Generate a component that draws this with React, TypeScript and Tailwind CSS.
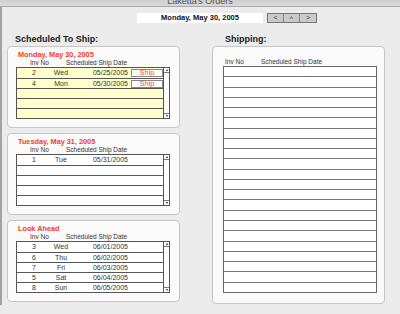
import React from "react";

const font = { fontFamily: '"Liberation Sans", Arial, sans-serif' };

type Row = { inv: string; day: string; date: string; ship?: boolean };

function ScrollBar() {
  return (
    <div className="w-[6px] border-l border-[#555] bg-white flex flex-col justify-between">
      <div className="h-[5px] border-b border-[#777] flex items-center justify-center">
        <div className="w-0 h-0 border-l-[1.5px] border-r-[1.5px] border-b-[2px] border-l-transparent border-r-transparent border-b-[#222]" />
      </div>
      <div className="h-[5px] border-t border-[#777] flex items-center justify-center">
        <div className="w-0 h-0 border-l-[1.5px] border-r-[1.5px] border-t-[2px] border-l-transparent border-r-transparent border-t-[#222]" />
      </div>
    </div>
  );
}

function SmallTable({ rows, yellow }: { rows: Row[]; yellow?: boolean }) {
  const all: (Row | null)[] = [...rows];
  while (all.length < 5) all.push(null);
  return (
    <div className={`ml-[8px] w-[154px] flex border border-[#555] ${yellow ? "bg-[#ffffcc]" : "bg-white"}`}>
      <div className="flex-1 flex flex-col">
        {all.map((r, i) => (
          <div
            key={i}
            className={`h-[10px] flex items-center text-[7px] leading-[10px] text-[#333] ${i > 0 ? "border-t border-[#555]" : ""}`}
          >
            {r && (
              <>
                <div className="w-[34px] text-center">{r.inv}</div>
                <div className="w-[20px] text-center">{r.day}</div>
                <div className="w-[58px] text-right pr-[1px]">{r.date}</div>
                {r.ship && (
                  <div className="ml-[2px] w-[32px] h-[8px] bg-white border border-[#888] text-[#ff4a3a] text-[7.5px] leading-[6px] text-center">
                    Ship
                  </div>
                )}
              </>
            )}
          </div>
        ))}
      </div>
      <ScrollBar />
    </div>
  );
}

function Panel({ title, rows, yellow }: { title: string; rows: Row[]; yellow?: boolean }) {
  return (
    <div className="h-[82px] rounded-[4px] border border-[#c6c6c6] bg-[#fafafa] pt-[3px]">
      <div className="ml-[10px] h-[9px] text-[7.3px] leading-[9px] font-bold text-[#f5401e]">{title}</div>
      <div className="h-[8px] flex text-[6.5px] leading-[8px] text-[#333]">
        <div className="ml-[22px] w-[36px]">Inv No</div>
        <div>Scheduled Ship Date</div>
      </div>
      <SmallTable rows={rows} yellow={yellow} />
    </div>
  );
}

export default function App() {
  const bigRows = Array.from({ length: 22 });
  return (
    <div className="w-[400px] h-[314px] bg-[#ebebeb] flex flex-col overflow-hidden" style={font}>
      {/* title bar */}
      <div className="h-[7px] overflow-hidden bg-gradient-to-b from-[#cfcfcf] to-[#d9d9d9] border-b border-[#a9a9a9] flex justify-center">
        <div className="-mt-[4px] text-[9px] leading-[10px] text-[#555]">Laketta's Orders</div>
      </div>
      <div className="h-[298px] border-l-2 border-[#a3a3a3] flex flex-col">
        {/* date row */}
        <div className="mt-[6px] h-[10px] flex">
          <div className="ml-[135px] w-[126px] h-[10px] bg-white text-[7.5px] leading-[10px] font-bold text-[#111] text-center">
            Monday, May 30, 2005
          </div>
          <div className="ml-[4px] flex h-[10px] border border-[#777] bg-[#c9c9c9]">
            <div className="w-[16px] text-[7px] leading-[8px] text-center text-[#333] border-r border-[#888]">&lt;</div>
            <div className="w-[16px] text-[7px] leading-[9px] text-center text-[#333] border-r border-[#888]">^</div>
            <div className="w-[16px] text-[7px] leading-[8px] text-center text-[#333]">&gt;</div>
          </div>
        </div>
        <div className="flex mt-[10px]">
          {/* left column */}
          <div className="ml-[5px] w-[173px] flex flex-col">
            <div className="ml-[8px] h-[12px] text-[9px] leading-[12px] font-bold text-[#1a1a1a]">Scheduled To Ship:</div>
            <div className="mt-[1px] flex flex-col gap-[5px]">
              <Panel
                title="Monday, May 30, 2005"
                yellow
                rows={[
                  { inv: "2", day: "Wed", date: "05/25/2005", ship: true },
                  { inv: "4", day: "Mon", date: "05/30/2005", ship: true },
                ]}
              />
              <Panel title="Tuesday, May 31, 2005" rows={[{ inv: "1", day: "Tue", date: "05/31/2005" }]} />
              <Panel
                title="Look Ahead"
                rows={[
                  { inv: "3", day: "Wed", date: "06/01/2005" },
                  { inv: "6", day: "Thu", date: "06/02/2005" },
                  { inv: "7", day: "Fri", date: "06/03/2005" },
                  { inv: "5", day: "Sat", date: "06/04/2005" },
                  { inv: "8", day: "Sun", date: "06/05/2005" },
                ]}
              />
            </div>
          </div>
          {/* right column */}
          <div className="ml-[32px] w-[173px] flex flex-col">
            <div className="ml-[13px] h-[12px] text-[9px] leading-[12px] font-bold text-[#1a1a1a]">Shipping:</div>
            <div className="mt-[1px] h-[258px] rounded-[4px] border border-[#c6c6c6] bg-[#fafafa] pt-[11px]">
              <div className="h-[8px] flex text-[6.5px] leading-[8px] text-[#333]">
                <div className="ml-[12px] w-[36px]">Inv No</div>
                <div>Scheduled Ship Date</div>
              </div>
              <div className="ml-[10px] w-[154px] h-[227px] border border-[#666] bg-white flex flex-col">
                {bigRows.map((_, i) => (
                  <div key={i} className={`flex-1 ${i > 0 ? "border-t border-[#777]" : ""}`} />
                ))}
              </div>
            </div>
          </div>
        </div>
      </div>
    </div>
  );
}
